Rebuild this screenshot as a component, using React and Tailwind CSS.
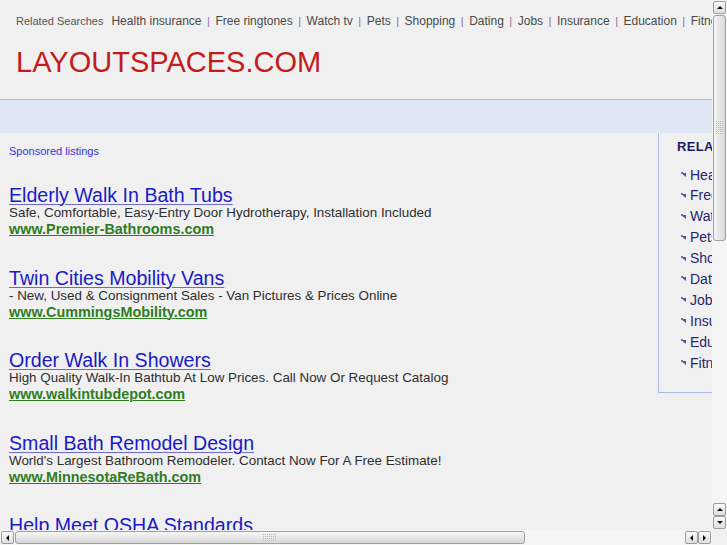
const topLinks = ['Health insurance', 'Free ringtones', 'Watch tv', 'Pets', 'Shopping', 'Dating', 'Jobs', 'Insurance', 'Education', 'Fitness']

const ads = [
  {
    title: 'Elderly Walk In Bath Tubs',
    text: 'Safe, Comfortable, Easy-Entry Door Hydrotherapy, Installation Included',
    url: 'www.Premier-Bathrooms.com',
  },
  {
    title: 'Twin Cities Mobility Vans',
    text: '- New, Used & Consignment Sales - Van Pictures & Prices Online',
    url: 'www.CummingsMobility.com',
  },
  {
    title: 'Order Walk In Showers',
    text: 'High Quality Walk-In Bathtub At Low Prices. Call Now Or Request Catalog',
    url: 'www.walkintubdepot.com',
  },
  {
    title: 'Small Bath Remodel Design',
    text: "World's Largest Bathroom Remodeler. Contact Now For A Free Estimate!",
    url: 'www.MinnesotaReBath.com',
  },
  {
    title: 'Help Meet OSHA Standards',
    text: 'Workplace Safety Products and Signs for Every Industry.',
    url: 'www.SafetySigns.com',
  },
]

function Grippy({ vertical }) {
  const cols = vertical ? 4 : 7
  const rows = vertical ? 7 : 4
  const dots = []
  for (let r = 0; r < rows; r++) {
    for (let c = 0; c < cols; c++) {
      dots.push(<rect key={`${r}-${c}`} x={c * 2} y={r * 2} width="1" height="1" fill="#b8b8b8" />)
    }
  }
  return (
    <svg width={cols * 2} height={rows * 2} className="block">
      {dots}
    </svg>
  )
}

function Arrow({ dir }) {
  const pts = {
    up: '1,5 4,2 7,5',
    down: '1,2 4,5 7,2',
    left: '5,1 2,4 5,7',
    right: '2,1 5,4 2,7',
  }
  return (
    <svg width="8" height="8" className="block">
      <polygon points={pts[dir]} fill="#111" />
    </svg>
  )
}

function ScrollButton({ dir }) {
  return (
    <div className="flex h-[13px] w-[13px] items-center justify-center rounded-[2px] border border-[#9c9c9c] bg-gradient-to-b from-[#fbfbfb] to-[#dedede]">
      <Arrow dir={dir} />
    </div>
  )
}

function Bullet() {
  return (
    <svg width="6" height="6" className="mr-[3px] shrink-0">
      <polygon points="0,1 5,5 5,1" fill="#4a5a9a" />
      <rect x="0" y="0" width="2" height="2" fill="#6a7ab0" />
    </svg>
  )
}

export default function App() {
  return (
    <div className="relative h-[545px] w-[727px] overflow-hidden bg-[#f0f0f0] font-['Liberation_Sans',Arial,sans-serif]">
      <div className="h-[530px] w-[712px] overflow-hidden">
        <div className="w-[900px]">
          <header className="h-[100px] border-b border-[#aebbdc] px-4 pt-3">
            <nav className="flex h-[18px] items-center whitespace-nowrap leading-[18px]">
              <span className="mr-[8px] text-[11px] text-[#555]">Related Searches</span>
              {topLinks.map((link, i) => (
                <span key={link} className="flex items-center text-[12px] text-[#4a4a4a]">
                  {i > 0 && <span className="mx-[5.5px] text-[11px] text-[#9a6aa0]">|</span>}
                  {link}
                </span>
              ))}
            </nav>
            <h1 className="mt-[15px] text-[29px] leading-[34px] text-[#c41b1b]">LAYOUTSPACES.COM</h1>
          </header>
          <div className="h-[33px] w-full bg-[#dfe6f4]" />

          <div className="flex">
            <main className="w-[658px] shrink-0 px-[9px] pt-[10px]">
              <p className="text-[11px] leading-4 text-[#3333e6]">Sponsored listings</p>
              <div className="mt-[26px]">
                {ads.map((ad) => (
                  <div key={ad.title} className="mb-[29.5px] whitespace-nowrap">
                    <a className="block text-[19.6px] leading-5 text-[#1a1ac4] underline decoration-[#6a6ad8] decoration-1 underline-offset-2">
                      {ad.title}
                    </a>
                    <p className="text-[13.4px] leading-4 text-[#2e2e2e]">{ad.text}</p>
                    <a className="block text-[14.4px] font-bold leading-[17px] text-[#2f7d1f] underline decoration-1 underline-offset-1">
                      {ad.url}
                    </a>
                  </div>
                ))}
              </div>
            </main>

            <aside className="h-[260px] w-[200px] shrink-0 border-b border-l border-[#aebbe4] pl-[18px] pt-[6px]">
              <h3 className="text-[13px] font-bold leading-4 tracking-[0.3px] text-[#1c1c5a]">RELATED SEARCHES</h3>
              <ul className="mt-[9.5px] pl-[4px]">
                {topLinks.map((link) => (
                  <li key={link} className="flex items-center text-[14px] leading-[20.9px] text-[#25256e]">
                    <Bullet />
                    {link}
                  </li>
                ))}
              </ul>
            </aside>
          </div>
        </div>
      </div>

      {/* vertical scrollbar */}
      <div className="absolute right-0 top-0 flex h-[530px] w-[15px] flex-col items-center bg-[#f5f5f5] pt-[1px]">
        <ScrollButton dir="up" />
        <div className="mt-[1px] flex h-[226px] w-[13px] items-center justify-center rounded-[3px] border border-[#a0a0a0] bg-gradient-to-r from-[#f6f6f6] to-[#d8d8d8]">
          <Grippy vertical />
        </div>
        <div className="flex-1" />
        <ScrollButton dir="up" />
        <ScrollButton dir="down" />
        <div className="h-[1px]" />
      </div>

      {/* horizontal scrollbar */}
      <div className="absolute bottom-0 left-0 flex h-[15px] w-[712px] items-center bg-[#f5f5f5] pl-[1px]">
        <ScrollButton dir="left" />
        <div className="ml-[1px] flex h-[13px] w-[510px] items-center justify-center rounded-[3px] border border-[#a0a0a0] bg-gradient-to-b from-[#f6f6f6] to-[#d8d8d8]">
          <Grippy />
        </div>
        <div className="flex-1" />
        <ScrollButton dir="left" />
        <ScrollButton dir="right" />
        <div className="w-[1px]" />
      </div>
      <div className="absolute bottom-0 right-0 h-[15px] w-[15px] bg-[#f0f0f0]" />
    </div>
  )
}
